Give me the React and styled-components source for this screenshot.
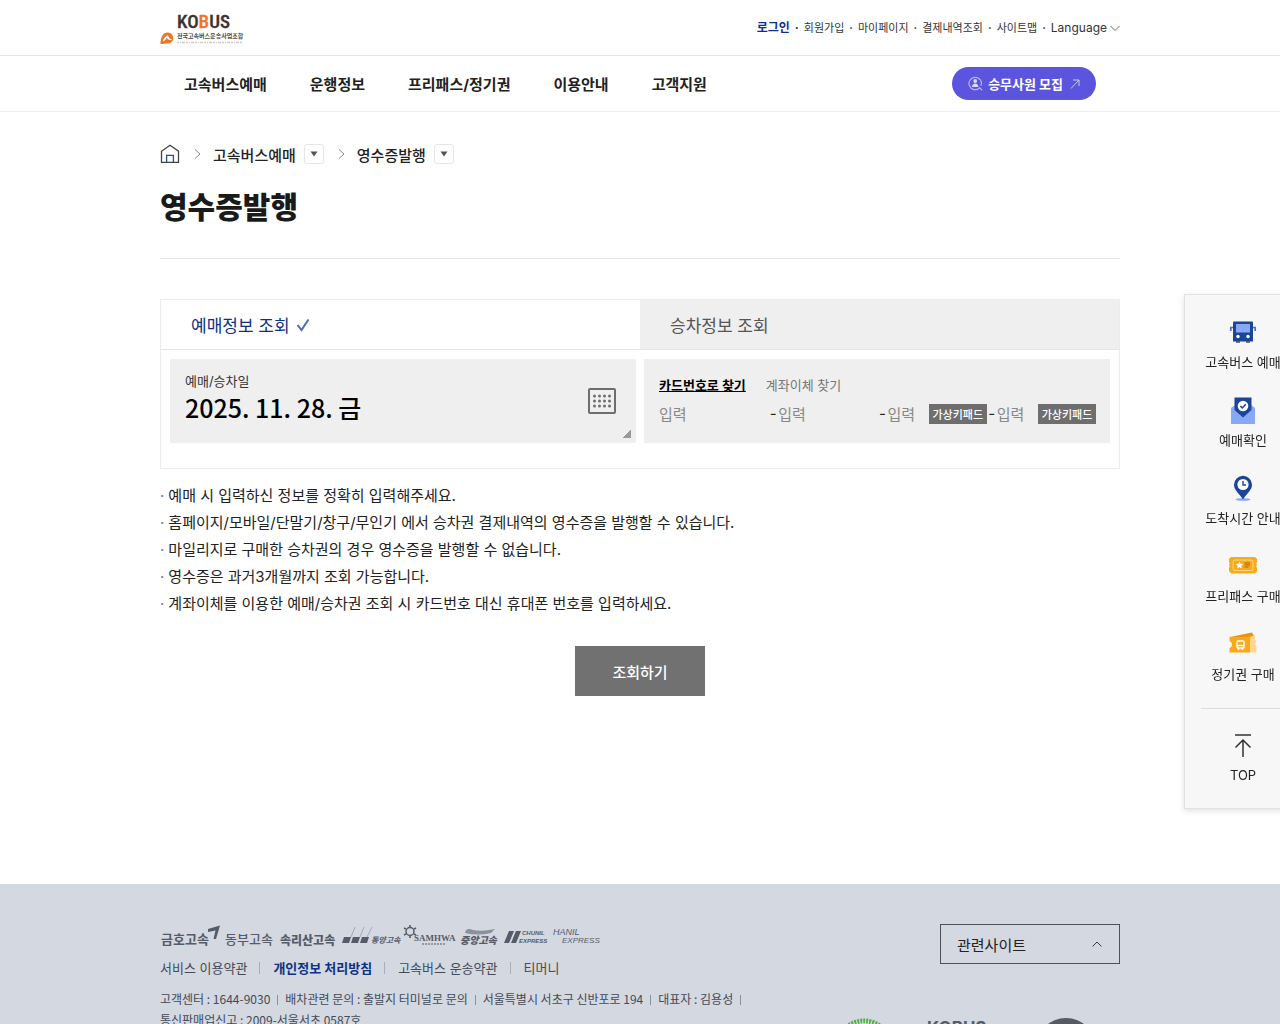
import React, { useState } from 'react'
import styled, { createGlobalStyle } from 'styled-components'

const utilLinks = ['회원가입', '마이페이지', '결제내역조회', '사이트맵']
const menus = ['고속버스예매', '운행정보', '프리패스/정기권', '이용안내', '고객지원']
const crumbs = ['고속버스예매', '영수증발행']
const notices = [
  '예매 시 입력하신 정보를 정확히 입력해주세요.',
  '홈페이지/모바일/단말기/창구/무인기 에서 승차권 결제내역의 영수증을 발행할 수 있습니다.',
  '마일리지로 구매한 승차권의 경우 영수증을 발행할 수 없습니다.',
  '영수증은 과거3개월까지 조회 가능합니다.',
  '계좌이체를 이용한 예매/승차권 조회 시 카드번호 대신 휴대폰 번호를 입력하세요.',
]
const policies = ['서비스 이용약관', '개인정보 처리방침', '고속버스 운송약관', '티머니']
const company = [
  '고객센터 : 1644-9030',
  '배차관련 문의 : 출발지 터미널로 문의',
  '서울특별시 서초구 신반포로 194',
  '대표자 : 김용성',
  '통신판매업신고 : 2009-서울서초 0587호',
]

const Chevron = ({ dir, size = 10, color = '#666' }) => {
  const d = {
    right: 'M3 0.5 L8 5 L3 9.5',
    down: 'M0.5 3 L5 7.5 L9.5 3',
    up: 'M0.5 7.5 L5 3 L9.5 7.5',
  }[dir]
  return (
    <svg width={size} height={size} viewBox="0 0 10 10" fill="none" stroke={color} aria-hidden="true">
      <path d={d} />
    </svg>
  )
}

const Logo = () => (
  <svg width="84" height="36" viewBox="0 0 84 36" role="img" aria-label="KOBUS 전국고속버스운송사업조합">
    <text x="17" y="18" fontSize="19" fontWeight="500" fontFamily="'Roboto Condensed', Lato, sans-serif" fill="#3a3432" stroke="#3a3432" strokeWidth="0.3">
      KO<tspan fill="#f0752b" stroke="#f0752b">B</tspan>US
    </text>
    <path d="M0.5 34 C0.5 27 3 22.5 7.5 22.5 C11.5 22.5 13.8 26 13.2 29 C12.7 31.8 10.5 33.5 7.5 33.5 C5 33.5 3 34 0.5 34Z" fill="#ee7427" />
    <path d="M2.5 31.5 C4 27.5 6 25.5 8 25.5 C9 28 10.5 29.5 12.5 30 C9.5 30.3 7.5 29.3 6.8 28 C5.8 29.8 4.5 31 2.5 31.5Z" fill="#fff" />
    <text x="17" y="28" fontSize="6" fontWeight="700" fill="#4b4644">전국고속버스운송사업조합</text>
    <path d="M17 32.5 H83" stroke="#cfcccb" strokeWidth="1.5" strokeDasharray="2 1 1 1 3 1" />
  </svg>
)

const HomeIcon = () => (
  <svg width="20" height="20" viewBox="0 0 20 20" fill="none">
    <path d="M1.5 7.2 L10 1.3 L18.5 7.2 V18.3 H1.5Z" stroke="#444" strokeWidth="1.3" />
    <path d="M6.6 18 V11.4 H13.4 V18" stroke="#1b4fa8" strokeWidth="1.3" />
  </svg>
)

const RecruitIcon = () => (
  <svg width="15" height="15" viewBox="0 0 15 15" fill="none" stroke="#b9b6f3" strokeWidth="1.2">
    <path d="M11.5 12 A6.2 6.2 0 1 1 13 9.8 M11.3 11.3 L14.3 14.3" />
    <circle cx="7.2" cy="5" r="1.9" fill="#d9d8fa" stroke="none" />
    <path d="M4 11 C4 6.2 10.4 6.2 10.4 11Z" fill="#d9d8fa" stroke="none" />
  </svg>
)

const CalendarIcon = () => (
  <svg width="28" height="26" viewBox="0 0 28 26">
    <rect x="1" y="1" width="26" height="24" rx="1" fill="none" stroke="#6e6e6e" strokeWidth="2" />
    {[8, 13, 18].map((y) =>
      [6.5, 11.5, 16.5, 21.5].map((x) => <circle key={`${x}-${y}`} cx={x} cy={y} r="1.5" fill="#6e6e6e" />)
    )}
  </svg>
)

const BusIcon = () => (
  <svg width="28" height="28" viewBox="0 0 28 28">
    <rect x="7" y="22" width="4" height="3" fill="#777" />
    <rect x="17" y="22" width="4" height="3" fill="#777" />
    <path d="M4 4.5 Q4 3.5 5 3.5 H23 Q24 3.5 24 4.5 V23.5 H4Z" fill="#1b4596" />
    <rect x="7" y="6" width="14" height="8.5" fill="#86a8f5" />
    <path d="M4 9.5 H1.8 V13 M24 9.5 H26.2 V13" fill="none" stroke="#4c6fc0" strokeWidth="1.7" />
    <circle cx="9" cy="18.5" r="1.7" fill="#fff" />
    <circle cx="19" cy="18.5" r="1.7" fill="#fff" />
  </svg>
)

const LetterIcon = () => (
  <svg width="28" height="28" viewBox="0 0 28 28">
    <path d="M2 12 L6 9 H22 L26 12 V28 H2Z" fill="#86a8f5" />
    <path d="M5.5 1.5 H22.5 V14 L14 21.5 L5.5 14Z" fill="#1b4596" />
    <circle cx="14" cy="10" r="5.3" fill="#fff" />
    <path d="M11.3 10 L13.3 12 L16.8 8.3" fill="none" stroke="#1b4596" strokeWidth="1.5" />
  </svg>
)

const PinIcon = () => (
  <svg width="28" height="28" viewBox="0 0 28 28">
    <ellipse cx="14" cy="25.5" rx="7.5" ry="1.3" fill="#86a8f5" />
    <path d="M14 25.5 C10 19.5 5 16 5 10.8 A9 9 0 0 1 23 10.8 C23 16 18 19.5 14 25.5Z" fill="#1b4596" />
    <circle cx="14" cy="10.5" r="5.6" fill="#fff" />
    <path d="M14 7 V11 H17" fill="none" stroke="#1b4596" strokeWidth="1.4" />
  </svg>
)

const TicketIcon = () => (
  <svg width="30" height="28" viewBox="0 0 30 28">
    <path d="M3 5 H27 L29 7 V10 Q27.5 11 29 13 Q27.5 14 29 16 V19 L27 21.5 H3 L1 19 V16 Q2.5 14 1 13 Q2.5 11 1 10 V7Z" fill="#f9a91a" />
    <rect x="5" y="8" width="20" height="10.5" rx="2" fill="none" stroke="#ffd98a" />
    <path d="M11.5 9.2 L12.6 11.8 L15.3 12 L13.2 13.8 L13.9 16.5 L11.5 15 L9.1 16.5 L9.8 13.8 L7.7 12 L10.4 11.8Z" fill="#fff" />
    <path d="M16.5 11 H22 M16.5 13 H22 M16.5 15 H20.5" stroke="#a8700d" />
  </svg>
)

const PassIcon = () => (
  <svg width="30" height="28" viewBox="0 0 30 28">
    <path d="M2 7 L24 2.5 L26 6 L24 9 H2Z" fill="#ea9410" />
    <path d="M21 7 L27 5.5 V9.5 L28.5 11.5 L26.8 13.5 L28.5 16.5 V22.5 H21Z" fill="#ffd694" />
    <path d="M1.5 7 H22 V22.5 H1.5 V18 Q4 17 4 14.5 Q4 12 1.5 11Z" fill="#f9a91a" />
    <rect x="9" y="11" width="7" height="7" rx="1" fill="none" stroke="#fff" strokeWidth="1.5" />
    <path d="M9 15.5 H16 M10.5 18 V20 M14.5 18 V20" stroke="#fff" strokeWidth="1.5" />
  </svg>
)

const TopIcon = () => (
  <svg width="20" height="26" viewBox="0 0 20 26" fill="none" stroke="#333" strokeWidth="1.5">
    <path d="M2 2 H18 M10 24 V7 M2.5 14.5 L10 7 L17.5 14.5" />
  </svg>
)

const quickMenus = [
  { label: '고속버스 예매', icon: <BusIcon /> },
  { label: '예매확인', icon: <LetterIcon /> },
  { label: '도착시간 안내', icon: <PinIcon /> },
  { label: '프리패스 구매', icon: <TicketIcon /> },
  { label: '정기권 구매', icon: <PassIcon /> },
]

// operator marks shown above the policy links
const Operators = () => (
  <svg width="440" height="26" viewBox="0 0 440 26" fill="#555b69" fontWeight="700" role="img" aria-label="고속버스 운송사">
    <text x="1" y="20" fontSize="13">금호고속</text>
    <path d="M48 5 L60 1.5 L56 15 L53.5 15 L55.5 6.5 L48 8Z" />
    <text x="65" y="20" fontSize="13" fontWeight="500">동부고속</text>
    <text x="120" y="21" fontSize="12" fontWeight="900">속리산고속</text>
    <path d="M184 13 H191 L189 19 H182Z M193 13 H200 L198 19 H191Z M202 13 H209 L207 19 H200Z" />
    <path d="M191 13 L195 3 M200 13 L204 3 M207 13 L212 3" stroke="#8f95a1" strokeWidth="0.7" />
    <text x="211" y="19" fontSize="8" fontStyle="italic">동양고속</text>
    <circle cx="250" cy="7.5" r="4" fill="none" stroke="#555b69" strokeWidth="1.5" />
    <path d="M250 1 V3 M250 12 V14 M244 4 L246 5 M254 10 L256 11 M244 11 L246 10 M254 5 L256 4" stroke="#555b69" strokeWidth="1.6" />
    <text x="254" y="17" fontSize="9" fontFamily="'Liberation Serif', serif">SAMHWA</text>
    <path d="M262 20 H285" stroke="#7d8390" strokeWidth="1.5" strokeDasharray="2 1" />
    <path d="M305 9 Q306 3 313 6 Q322 8 335 5 L331 9 Q318 12 305 9Z" fill="#8a909c" />
    <text x="300" y="20" fontSize="10" fontWeight="900" fontStyle="italic">중앙고속</text>
    <path d="M349 7 H354 L349 19 H344Z M356 7 H361 L356 19 H351Z" />
    <g fontFamily="'Liberation Sans', sans-serif" fontStyle="italic">
      <text x="362" y="11" fontSize="6">CHUNIL</text>
      <text x="359" y="19" fontSize="6">EXPRESS</text>
      <text x="393" y="11" fontSize="9" fontWeight="400">HANIL</text>
      <text x="402" y="19" fontSize="8" fontWeight="400">EXPRESS</text>
    </g>
  </svg>
)

const App = () => {
  const [tab, setTab] = useState(0)
  return (
    <>
      <GlobalStyle />
      <Header>
        <div className="util">
          <Inner>
            <a href="#home"><Logo /></a>
            <UtilNav>
              <a href="#login" className="login">로그인</a>
              {utilLinks.map((item) => (
                <a key={item} href="#util">{item}</a>
              ))}
              <button type="button">Language <Chevron dir="down" /></button>
            </UtilNav>
          </Inner>
        </div>
        <div className="gnb">
          <Inner>
            <MainNav>
              {menus.map((item) => (
                <a key={item} href="#menu">{item}</a>
              ))}
            </MainNav>
            <Recruit href="#recruit">
              <RecruitIcon />
              승무사원 모집
              <svg width="10" height="10" viewBox="0 0 10 10" fill="none" stroke="#c9c7f6"><path d="M1 9.5 L9 1 M3 1 H9 V7" /></svg>
            </Recruit>
          </Inner>
        </div>
      </Header>

      <Main>
        <Breadcrumb aria-label="현재 위치">
          <a href="#home" aria-label="홈"><HomeIcon /></a>
          {crumbs.map((item) => (
            <Crumb key={item}>
              <Chevron dir="right" color="#888" />
              <span>{item}</span>
              <button type="button" aria-label={`${item} 메뉴`}>
                <svg width="8" height="6" viewBox="0 0 8 6"><path d="M0.5 0.5 H7.5 L4 5.5Z" fill="#555" /></svg>
              </button>
            </Crumb>
          ))}
        </Breadcrumb>
        <Title>영수증발행</Title>

        <SearchBox>
          <div className="tabs">
            <Tab type="button" $active={tab === 0} onClick={() => setTab(0)}>
              예매정보 조회
              {tab === 0 && <Check />}
            </Tab>
            <Tab type="button" $active={tab === 1} onClick={() => setTab(1)}>
              승차정보 조회
              {tab === 1 && <Check />}
            </Tab>
          </div>
          <div className="fields">
            <DateButton type="button">
              <span className="texts">
                <span className="label">예매/승차일</span>
                <span className="date">2025. 11. 28. 금</span>
              </span>
              <CalendarIcon />
            </DateButton>
            <CardField>
              <div className="ways">
                <a href="#card" className="on">카드번호로 찾기</a>
                <a href="#account">계좌이체 찾기</a>
              </div>
              <div className="numbers">
                {[1, 2, 3, 4].map((n) => (
                  <NumberGroup key={n}>
                    {n > 1 && <span>-</span>}
                    <input type={n > 2 ? 'password' : 'text'} maxLength={4} placeholder="입력" aria-label={`카드번호 ${n}`} />
                    {n > 2 && <button type="button">가상키패드</button>}
                  </NumberGroup>
                ))}
              </div>
            </CardField>
          </div>
        </SearchBox>

        <Notices>
          {notices.map((text) => (
            <li key={text}>{text}</li>
          ))}
        </Notices>
        <Submit type="submit">조회하기</Submit>
      </Main>

      <Quick>
        {quickMenus.map(({ label, icon }) => (
          <QuickLink key={label} href="#quick">
            {icon}
            {label}
          </QuickLink>
        ))}
        <div className="top">
          <QuickLink href="#root">
            <TopIcon />
            TOP
          </QuickLink>
        </div>
      </Quick>

      <Footer>
        <Inner>
          <div className="info">
            <Operators />
            <Policies>
              {policies.map((item, i) => (
                <li key={item}><a href="#policy" className={i === 1 ? 'strong' : ''}>{item}</a></li>
              ))}
            </Policies>
            <Company>
              {company.map((item) => (
                <li key={item}>{item}</li>
              ))}
            </Company>
          </div>
          <div className="side">
            <Related type="button">
              관련사이트
              <Chevron dir="up" color="#333a48" />
            </Related>
            <Marks>
              <svg width="60" height="60" viewBox="0 0 60 60">
                <circle cx="30" cy="30" r="27" fill="#edf6e9" stroke="#55b04b" strokeWidth="5" strokeDasharray="2 1" />
              </svg>
              <strong>KOBUS</strong>
              <svg width="60" height="60" viewBox="0 0 60 60">
                <circle cx="30" cy="30" r="30" fill="#555a66" />
              </svg>
            </Marks>
          </div>
        </Inner>
      </Footer>
    </>
  )
}

const Check = () => (
  <svg width="14" height="14" viewBox="0 0 14 14" fill="none" stroke="#4a6db8" strokeWidth="2" aria-hidden="true">
    <path d="M1.5 7 L5.5 12 L12.5 1.5" />
  </svg>
)

const GlobalStyle = createGlobalStyle`
  * {
    box-sizing: border-box;
  }
  body {
    margin: 0;
    background: #fff;
    color: #222;
    font-family: Inter, 'Noto Sans CJK KR', sans-serif;
    font-size: 15px;
  }
  a {
    color: inherit;
    text-decoration: none;
  }
  button,
  input {
    margin: 0;
    padding: 0;
    border: 0;
    background: none;
    color: inherit;
    font: inherit;
  }
  button {
    cursor: pointer;
  }
  ul {
    margin: 0;
    padding: 0;
    list-style: none;
  }
  svg {
    display: block;
    flex: none;
  }
`

const Inner = styled.div`
  display: flex;
  align-items: center;
  justify-content: space-between;
  max-width: 960px;
  margin: 0 auto;
`

const Header = styled.header`
  .util {
    border-bottom: 1px solid #e5e5e5;
  }
  .gnb {
    border-bottom: 1px solid #eee;
  }
  .util ${Inner},
  .gnb ${Inner} {
    height: 55px;
  }
  .gnb ${Inner} {
    padding: 0 24px;
  }
`

const UtilNav = styled.nav`
  display: flex;
  align-items: center;
  font-size: 11px;
  line-height: 18px;
  color: #333;
  .login {
    font-size: 12px;
    font-weight: 700;
    color: #0d3187;
  }
  a::after {
    content: '·';
    margin: 0 5px;
    font-weight: 700;
  }
  button {
    display: flex;
    align-items: center;
    gap: 3px;
    font-size: 12px;
  }
`

const MainNav = styled.nav`
  display: flex;
  gap: 43px;
  font-weight: 700;
`

const Recruit = styled.a`
  display: flex;
  align-items: center;
  gap: 5px;
  height: 33px;
  padding: 0 16px;
  border-radius: 17px;
  background: #5b54de;
  color: #fff;
  font-size: 13px;
  font-weight: 700;
  svg:last-child {
    margin-left: 2px;
  }
`

const Main = styled.main`
  max-width: 960px;
  margin: 0 auto;
  padding: 32px 0 188px;
`

const Breadcrumb = styled.nav`
  display: flex;
  align-items: center;
  height: 20px;
  font-weight: 500;
`

const Crumb = styled.div`
  display: flex;
  align-items: center;
  margin-left: 12px;
  span {
    margin: 0 8px 0 11px;
  }
  button {
    display: grid;
    place-items: center;
    width: 20px;
    height: 20px;
    border: 1px solid #e5e5e5;
    border-radius: 3px;
  }
`

const Title = styled.h1`
  margin: 0 0 40px;
  padding: 23px 0 31px;
  border-bottom: 1px solid #e5e5e5;
  font-size: 30px;
  line-height: 40px;
  font-weight: 900;
  color: #1a1a1a;
`

const SearchBox = styled.section`
  border: 1px solid #ececec;
  .tabs {
    display: grid;
    grid-template-columns: 1fr 1fr;
    border-bottom: 1px solid #e5e5e5;
  }
  .fields {
    display: grid;
    grid-template-columns: 1fr 1fr;
    gap: 8px;
    padding: 9px 9px 25px;
  }
`

const Tab = styled.button`
  display: flex;
  align-items: center;
  gap: 6px;
  height: 49px;
  padding: 0 30px;
  font-size: 17px;
  background: ${({ $active }) => ($active ? '#fff' : '#efefef')};
  color: ${({ $active }) => ($active ? '#0d3187' : '#555')};
`

const DateButton = styled.button`
  display: flex;
  align-items: center;
  justify-content: space-between;
  height: 84px;
  padding: 0 20px 0 15px;
  border-radius: 2px;
  text-align: left;
  background: linear-gradient(135deg, transparent 50%, #999 50%) no-repeat right 5px bottom 5px / 8px 8px #efefef;
  .texts {
    display: grid;
    padding-bottom: 8px;
  }
  .label {
    font-size: 13px;
    line-height: 20px;
    color: #333;
  }
  .date {
    font-family: 'Noto Sans CJK KR', sans-serif;
    font-size: 25px;
    font-weight: 500;
    line-height: 32px;
    color: #000;
  }
`

const CardField = styled.div`
  height: 84px;
  padding: 16px 14px 0 15px;
  background: #efefef;
  .ways {
    display: flex;
    gap: 20px;
    font-size: 13px;
    line-height: 20px;
    color: #777;
  }
  .on {
    color: #000;
    font-weight: 700;
    text-decoration: underline;
  }
  .numbers {
    display: flex;
    margin-top: 9px;
  }
`

const NumberGroup = styled.div`
  display: flex;
  align-items: center;
  flex: 1;
  min-width: 0;
  span {
    width: 10px;
    text-align: center;
    line-height: 20px;
  }
  input {
    flex: 1;
    min-width: 0;
    width: 0;
    height: 20px;
    outline: 0;
    &::placeholder {
      color: #888;
      opacity: 1;
    }
  }
  button {
    width: 58px;
    height: 20px;
    background: #6e6e6e;
    color: #fff;
    font-size: 11px;
    font-weight: 500;
  }
`

const Notices = styled.ul`
  margin-top: 13px;
  line-height: 27px;
  li {
    display: flex;
    gap: 4px;
  }
  li::before {
    content: '·';
    color: #777;
  }
`

const Submit = styled.button`
  display: block;
  width: 130px;
  height: 50px;
  margin: 29px auto 0;
  background: #717171;
  color: #fff;
  font-weight: 500;
`

const Quick = styled.aside`
  position: fixed;
  top: 294px;
  left: calc(50% + 544px);
  width: 118px;
  padding: 23px 16px;
  border: 1px solid #e2e2e2;
  background: #f7f7f7;
  box-shadow: 0 2px 6px rgba(0, 0, 0, 0.12);
  .top {
    padding-top: 24px;
    border-top: 1px solid #ddd;
  }
`

const QuickLink = styled.a`
  display: flex;
  flex-direction: column;
  align-items: center;
  gap: 6px;
  margin-bottom: 24px;
  font-size: 13px;
  line-height: 20px;
  white-space: nowrap;
  .top & {
    margin: 0;
  }
`

const Footer = styled.footer`
  padding: 40px 0;
  background: #d3d8e1;
  color: #444a57;
  ${Inner} {
    align-items: flex-start;
  }
  .info {
    flex: 1;
  }
  .side {
    display: flex;
    flex-direction: column;
    align-items: flex-end;
  }
`

const Policies = styled.ul`
  display: flex;
  margin-top: 8px;
  font-size: 13px;
  line-height: 20px;
  li + li::before {
    content: '';
    display: inline-block;
    width: 1px;
    height: 12px;
    margin: 0 13px 0 12px;
    background: #a9afba;
    vertical-align: -1px;
  }
  .strong {
    font-weight: 700;
    color: #0d3187;
  }
`

const Company = styled.ul`
  display: flex;
  flex-wrap: wrap;
  margin-top: 10px;
  font-family: 'Noto Sans CJK KR', sans-serif;
  font-size: 12px;
  line-height: 21px;
  li:not(:last-child)::after {
    content: '';
    display: inline-block;
    width: 1px;
    height: 10px;
    margin: 0 7px;
    background: #8b919d;
    vertical-align: -1px;
  }
`

const Related = styled.button`
  display: flex;
  align-items: center;
  justify-content: space-between;
  width: 180px;
  height: 40px;
  padding: 0 17px 0 16px;
  border: 1px solid #4b5160;
  color: #222;
`

const Marks = styled.div`
  display: flex;
  gap: 33px;
  margin: 54px 24px 0 0;
  strong {
    width: 76px;
    font-size: 17px;
    line-height: 20px;
    color: #555b69;
  }
`

export default App
